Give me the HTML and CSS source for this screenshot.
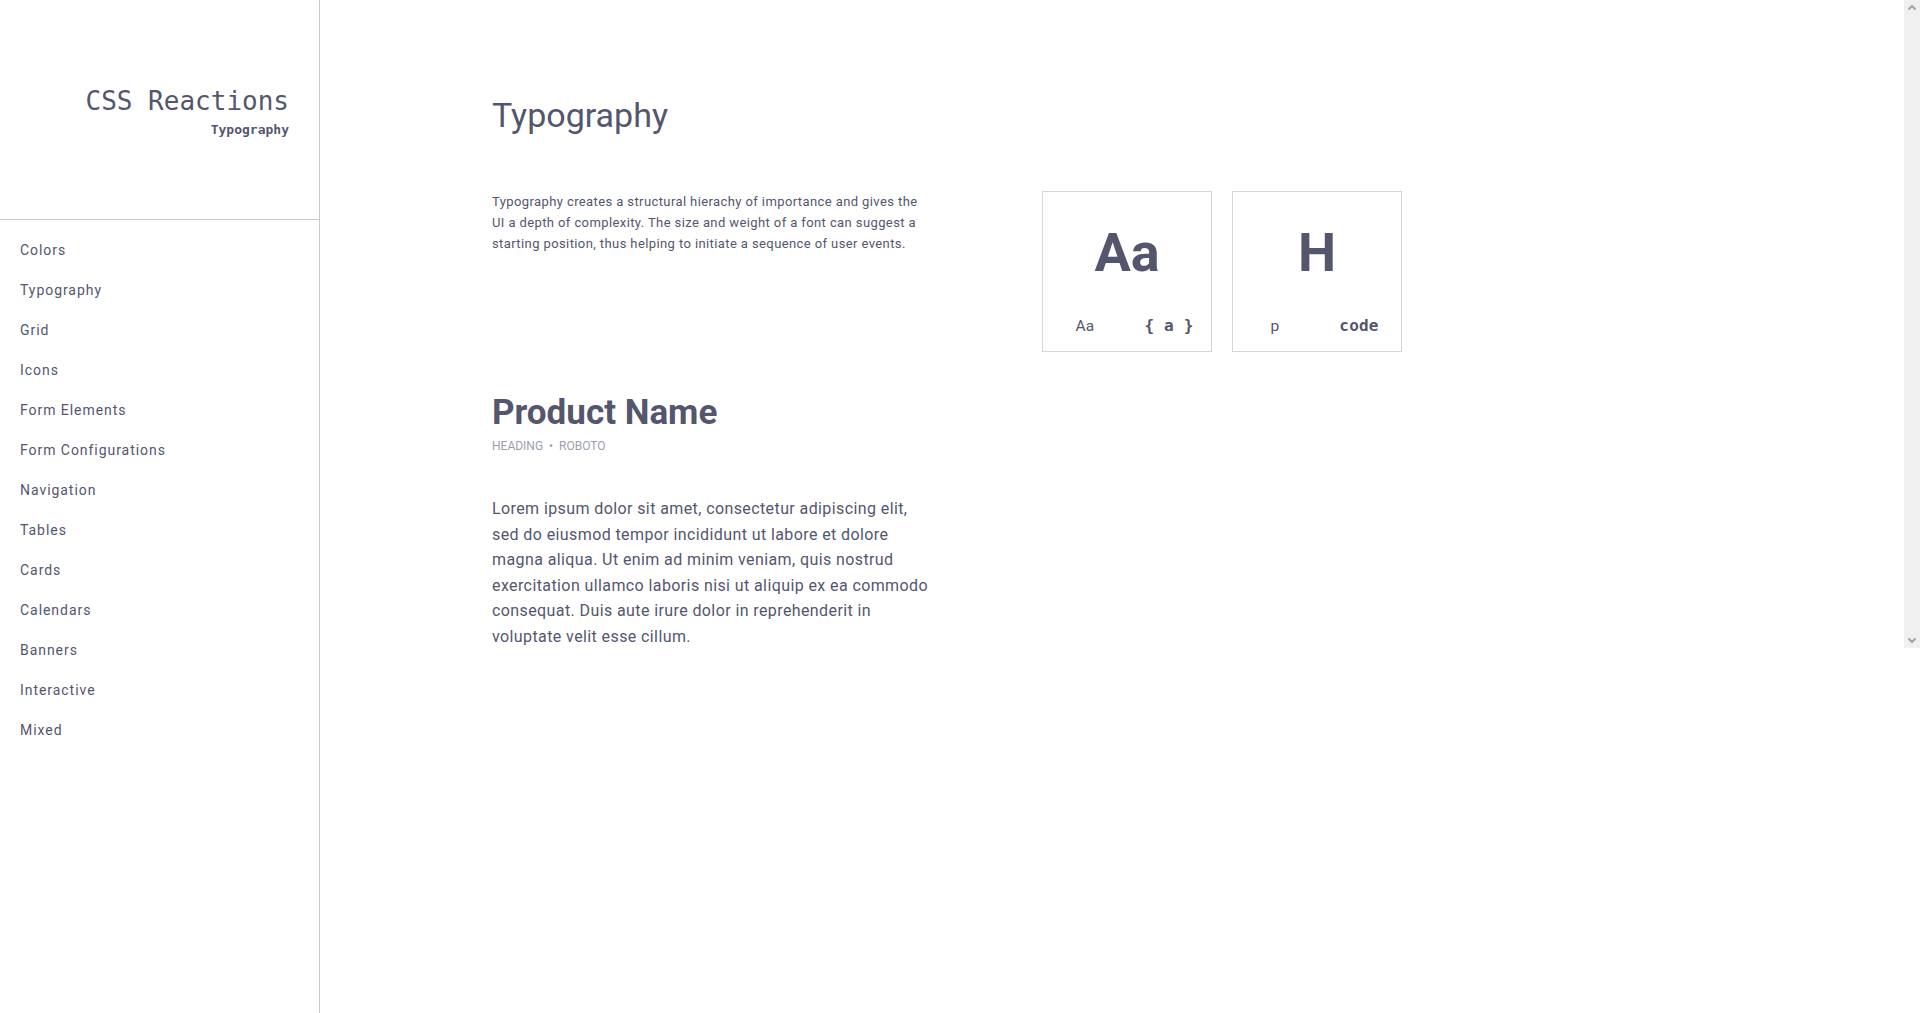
FILE: index.html
```html
<!DOCTYPE html>
<html lang="en">
<head>
<meta charset="utf-8">
<title>CSS Reactions - Typography</title>
<link rel="stylesheet" href="styles.css">
</head>
<body>
<div class="app">
  <aside class="sidebar">
    <header class="brand">
      <div class="brand-title">CSS Reactions</div>
      <div class="brand-sub">Typography</div>
    </header>
    <nav class="nav">
      <a href="#">Colors</a>
      <a href="#">Typography</a>
      <a href="#">Grid</a>
      <a href="#">Icons</a>
      <a href="#">Form Elements</a>
      <a href="#">Form Configurations</a>
      <a href="#">Navigation</a>
      <a href="#">Tables</a>
      <a href="#">Cards</a>
      <a href="#">Calendars</a>
      <a href="#">Banners</a>
      <a href="#">Interactive</a>
      <a href="#">Mixed</a>
    </nav>
  </aside>
  <main class="main">
    <div class="content">
      <h1 class="page-title">Typography</h1>
      <section class="intro">
        <p class="intro-text">Typography creates a structural hierachy of importance and gives the UI a depth of complexity. The size and weight of a font can suggest a starting position, thus helping to initiate a sequence of user events.</p>
        <div class="cards">
          <div class="card">
            <div class="card-big">Aa</div>
            <div class="card-row">
              <span class="sample">Aa</span>
              <span class="sample mono">{ a }</span>
            </div>
          </div>
          <div class="card">
            <div class="card-big">H</div>
            <div class="card-row">
              <span class="sample">p</span>
              <span class="sample mono">code</span>
            </div>
          </div>
        </div>
      </section>
      <section class="specimen">
        <h2 class="specimen-title">Product Name</h2>
        <div class="specimen-meta">HEADING <span class="dot">•</span> ROBOTO</div>
        <p class="specimen-body">Lorem ipsum dolor sit amet, consectetur adipiscing elit, sed do eiusmod tempor incididunt ut labore et dolore magna aliqua. Ut enim ad minim veniam, quis nostrud exercitation ullamco laboris nisi ut aliquip ex ea commodo consequat. Duis aute irure dolor in reprehenderit in voluptate velit esse cillum.</p>
      </section>
    </div>
    <div class="scrollbar" aria-hidden="true">
      <svg class="sb-arrow" width="16" height="16" viewBox="0 0 16 16"><polyline points="4.5,9.5 8,6 11.5,9.5" fill="none" stroke="#a3a3a3" stroke-width="2"/></svg>
      <svg class="sb-arrow" width="16" height="16" viewBox="0 0 16 16"><polyline points="4.5,6.5 8,10 11.5,6.5" fill="none" stroke="#a3a3a3" stroke-width="2"/></svg>
    </div>
  </main>
</div>
</body>
</html>
```

FILE: styles.css
```css
* { box-sizing: border-box; }

html, body {
  margin: 0;
  padding: 0;
  height: 100%;
  background: #ffffff;
}

body {
  font-family: Roboto, "Liberation Sans", sans-serif;
  color: #54566e;
}

.app {
  display: flex;
  height: 100vh;
  align-items: flex-start;
}

.sidebar {
  width: 320px;
  flex: 0 0 320px;
  height: 100vh;
  border-right: 1px solid #cbcbcb;
}

.brand {
  height: 220px;
  border-bottom: 1px solid #cbcbcb;
  padding: 86px 30px 0 0;
  text-align: right;
}

.brand-title {
  font-family: "DejaVu Sans Mono", "Liberation Mono", monospace;
  font-size: 26px;
  line-height: 30px;
  color: #54566e;
}

.brand-sub {
  margin-top: 6px;
  font-family: "DejaVu Sans Mono", "Liberation Mono", monospace;
  font-size: 13px;
  line-height: 16px;
  font-weight: bold;
  color: #54566e;
}

.nav {
  display: flex;
  flex-direction: column;
  padding-top: 10px;
}

.nav a {
  display: block;
  padding-left: 20px;
  font-size: 14px;
  line-height: 40px;
  letter-spacing: 0.95px;
  color: #54566e;
  text-decoration: none;
}

.main {
  flex: 1;
  display: flex;
  height: 648px;
}

.content {
  flex: 1;
  padding: 95px 0 0 172px;
}

.scrollbar {
  flex: 0 0 16px;
  width: 16px;
  height: 648px;
  background: #f0f0f0;
  display: flex;
  flex-direction: column;
  justify-content: space-between;
}

.sb-arrow {
  display: block;
}

.page-title {
  margin: 0;
  font-size: 34px;
  line-height: 41px;
  font-weight: 400;
  letter-spacing: 0;
  color: #54566e;
}

.intro {
  display: flex;
  align-items: flex-start;
  margin-top: 55px;
}

.intro-text {
  width: 440px;
  margin: 0 110px 0 0;
  font-size: 13px;
  line-height: 21px;
  letter-spacing: 0.4px;
  color: #54566e;
}

.cards {
  display: flex;
  gap: 20px;
}

.card {
  width: 170px;
  height: 161px;
  border: 1px solid #d6d6d6;
  padding-top: 34px;
}

.card-big {
  text-align: center;
  font-size: 54px;
  line-height: 54px;
  font-weight: 700;
  color: #54566e;
}

.card-row {
  display: flex;
  align-items: baseline;
  margin-top: 36px;
}

.sample {
  flex: 1;
  text-align: center;
  font-size: 15.5px;
  line-height: 20px;
  letter-spacing: 0.3px;
  color: #54566e;
}

.sample.mono {
  font-family: "DejaVu Sans Mono", "Liberation Mono", monospace;
  font-size: 16px;
  letter-spacing: 0.2px;
  font-weight: bold;
}

.specimen {
  margin-top: 40px;
}

.specimen-title {
  margin: 0;
  font-size: 35px;
  line-height: 41px;
  font-weight: 700;
  color: #54566e;
}

.specimen-meta {
  margin-top: 5px;
  font-size: 12px;
  line-height: 16px;
  color: #9c9eac;
}

.dot {
  margin: 0 3px;
}

.specimen-body {
  width: 440px;
  margin: 42px 0 0;
  font-size: 16px;
  line-height: 25.6px;
  letter-spacing: 0.4px;
  color: #54566e;
}
```
